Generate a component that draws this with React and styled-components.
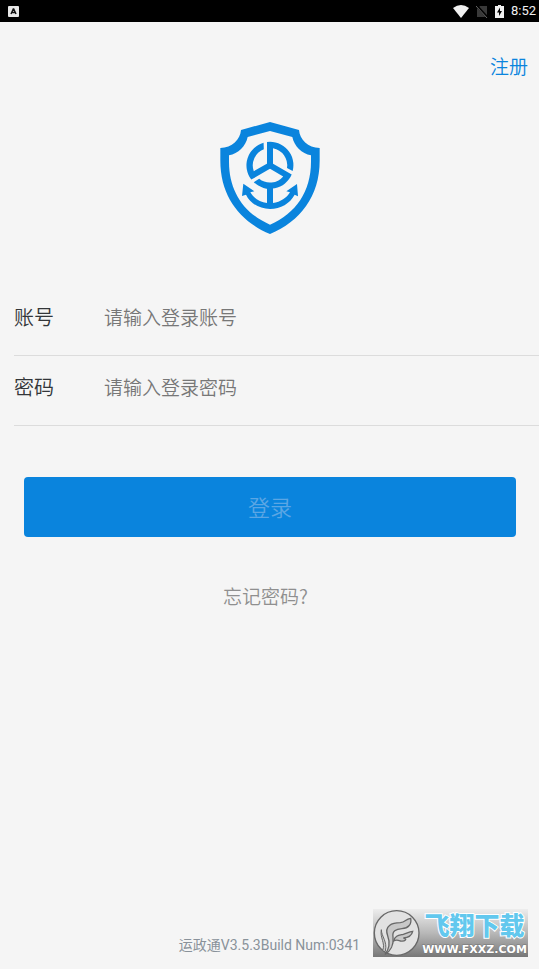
import React from "react";
import styled, { createGlobalStyle } from "styled-components";

const GlobalStyle = createGlobalStyle`
  * { box-sizing: border-box; }
  body {
    margin: 0;
    background: #f5f5f5;
    font-family: Roboto, "Noto Sans CJK SC", sans-serif;
  }
`;

const Screen = styled.div`
  position: relative;
  display: flex;
  flex-direction: column;
  min-height: 100vh;
  background: #f5f5f5;
`;

const StatusBar = styled.header`
  display: flex;
  align-items: center;
  justify-content: space-between;
  height: 22px;
  padding: 0 3px 0 8px;
  background: #000;
  color: #f0f0f0;
`;

const StatusIcons = styled.div`
  display: flex;
  align-items: center;
  gap: 7px;
`;

const Clock = styled.time`
  font-size: 13px;
  line-height: 22px;
`;

const TopBar = styled.nav`
  display: flex;
  justify-content: flex-end;
  padding: 30px 11px 0;
`;

const TextLink = styled.a`
  color: ${(p) => p.$color};
  font-family: "Noto Sans CJK SC", sans-serif;
  font-size: 19px;
  font-weight: 350;
  line-height: 28px;
  text-decoration: none;
`;

const LogoArea = styled.div`
  display: flex;
  justify-content: center;
  padding: 35px 0 46px;
`;

const Form = styled.form`
  display: flex;
  flex-direction: column;
  font-family: "Noto Sans CJK SC", sans-serif;
  font-weight: 350;
`;

const Field = styled.label`
  display: flex;
  align-items: center;
  height: 70px;
  margin-left: 14px;
  padding-bottom: 8px;
  border-bottom: 1px solid #dcdcdc;
`;

const FieldName = styled.span`
  width: 90px;
  color: #333639;
  font-size: 20px;
  line-height: 30px;
`;

const FieldInput = styled.input`
  flex: 1;
  min-width: 0;
  height: 40px;
  padding: 0;
  border: 0;
  outline: 0;
  background: transparent;
  color: #333639;
  font-family: inherit;
  font-size: 19px;
  font-weight: inherit;
  &::placeholder { color: #777; opacity: 1; }
`;

const LoginButton = styled.button`
  height: 60px;
  margin: 51px 23px 0 24px;
  padding: 0 0 2px;
  border: 0;
  border-radius: 4px;
  background: #0a84dd;
  color: #5ba6e4;
  font-family: inherit;
  font-size: 22px;
  font-weight: inherit;
`;

const Forgot = styled.div`
  display: flex;
  justify-content: center;
  padding: 45px 8px 0 0;
`;

const Version = styled.footer`
  margin-top: auto;
  padding-bottom: 14px;
  color: #89929a;
  font-size: 14px;
  line-height: 20px;
  text-align: center;
`;

const Watermark = styled.aside`
  position: absolute;
  right: 11px;
  bottom: 12px;
  display: flex;
  align-items: center;
  width: 155px;
  height: 48px;
  background: linear-gradient(#ededed, #b8b8b8 50%, #777);
`;

const WatermarkText = styled.div`
  display: flex;
  flex-direction: column;
  align-items: center;
  flex: 1;
`;

const SiteName = styled.strong`
  color: #62c8ee;
  font-size: 25px;
  font-weight: 900;
  line-height: 32px;
  white-space: nowrap;
  -webkit-text-stroke: 2px #fff;
  paint-order: stroke fill;
`;

const SiteAddress = styled.span`
  color: #fff;
  font-family: "DejaVu Sans", sans-serif;
  font-size: 11px;
  font-weight: 700;
  line-height: 13px;
  -webkit-text-stroke: 1px #777;
  paint-order: stroke fill;
`;

function KeyboardIcon() {
  return (
    <svg width="11" height="11" viewBox="0 0 11 11" aria-hidden="true">
      <rect width="11" height="11" rx="1" fill="#e8e8e8" />
      <path d="M3 8 5.3 3h.4L8 8M4 6.5h3" fill="none" stroke="#111" strokeWidth="1.5" />
    </svg>
  );
}

function WifiIcon() {
  return (
    <svg width="16" height="13" viewBox="0 0 16 13" aria-hidden="true">
      <path d="M0 3Q8-3 16 3L8 13Z" fill="#f0f0f0" />
    </svg>
  );
}

function NoSimIcon() {
  return (
    <svg width="12" height="13" viewBox="0 0 12 13" aria-hidden="true">
      <path d="M4 1h7v11H1V4Z" fill="#393939" />
      <path d="m0 0 12 13" stroke="#000" strokeWidth="2.5" />
      <path d="m0 1 11 12" stroke="#666" strokeWidth="1" />
    </svg>
  );
}

function BatteryIcon() {
  return (
    <svg width="9" height="13" viewBox="0 0 9 13" aria-hidden="true">
      <path d="M3 0h3v1h3v12H0V1h3Z" fill="#f0f0f0" />
      <path d="M5 2.5 2 7.5h2v3.5l3-5H5Z" fill="#000" />
    </svg>
  );
}

function ShieldLogo() {
  const blade = "M-9 5V-70A70 70 0 0 1 68 17L51 8A52 52 0 0 0 9-51V5Z";
  return (
    <svg width="120" height="125" viewBox="0 0 360 375" role="img" aria-label="运政通">
      <g fill="#0a84dd">
        <path
          fillRule="evenodd"
          d="M180 21 267 45C269 74 294 98 329 99V137C329 244 270 319 180 357C90 319 31 244 31 137V99C66 98 91 74 93 45ZM180 48 113 66C107 94 85 116 57 121V140C57 229 102 295 180 329C258 295 303 229 303 140V121C275 116 253 94 247 66Z"
        />
        <g transform="translate(180 151)">
          <path d={blade} />
          <path d={blade} transform="rotate(120)" />
          <path d={blade} transform="rotate(240)" />
        </g>
        <path d="M171 212H189V264C212 261 230 249 240 232L229 229L261 207L264 244L254 239C240 265 212 282 180 282C148 282 120 265 108 239L96 243L100 206L133 229L121 232C131 249 149 261 171 264Z" />
      </g>
    </svg>
  );
}

function WatermarkLogo() {
  return (
    <svg width="48" height="48" viewBox="0 0 144 144" aria-hidden="true">
      <circle cx="71" cy="72" r="67" fill="#e2e2e2" stroke="#686868" strokeWidth="4" />
      <path
        d="M36 136C50 118 51 99 44 80C33 50 57 41 82 41C98 40 97 30 113 28C117 45 106 58 87 59C68 60 57 67 60 84C63 108 52 127 36 136Z"
        fill="#c8c8c8"
        stroke="#686868"
        strokeWidth="4"
      />
      <path
        d="M62 96C66 79 78 79 91 76C103 73 106 69 119 67C116 81 106 86 91 87C105 89 96 98 83 96C74 93 70 91 62 96Z"
        fill="#c8c8c8"
        stroke="#686868"
        strokeWidth="4"
      />
      <path d="M29 124C38 103 20 86 25 62C25 82 44 98 37 126" fill="#c8c8c8" stroke="#686868" strokeWidth="3" />
    </svg>
  );
}

export default function App() {
  return (
    <>
      <GlobalStyle />
      <Screen>
        <StatusBar>
          <KeyboardIcon />
          <StatusIcons>
            <WifiIcon />
            <NoSimIcon />
            <BatteryIcon />
            <Clock>8:52</Clock>
          </StatusIcons>
        </StatusBar>
        <TopBar>
          <TextLink href="#register" $color="#0a84dd">注册</TextLink>
        </TopBar>
        <LogoArea>
          <ShieldLogo />
        </LogoArea>
        <Form>
          <Field>
            <FieldName>账号</FieldName>
            <FieldInput type="text" placeholder="请输入登录账号" />
          </Field>
          <Field>
            <FieldName>密码</FieldName>
            <FieldInput type="password" placeholder="请输入登录密码" />
          </Field>
          <LoginButton type="button">登录</LoginButton>
        </Form>
        <Forgot>
          <TextLink href="#forgot" $color="#8f8f8f">忘记密码?</TextLink>
        </Forgot>
        <Version>运政通V3.5.3Build Num:0341</Version>
        <Watermark>
          <WatermarkLogo />
          <WatermarkText>
            <SiteName>飞翔下载</SiteName>
            <SiteAddress>WWW.FXXZ.COM</SiteAddress>
          </WatermarkText>
        </Watermark>
      </Screen>
    </>
  );
}
